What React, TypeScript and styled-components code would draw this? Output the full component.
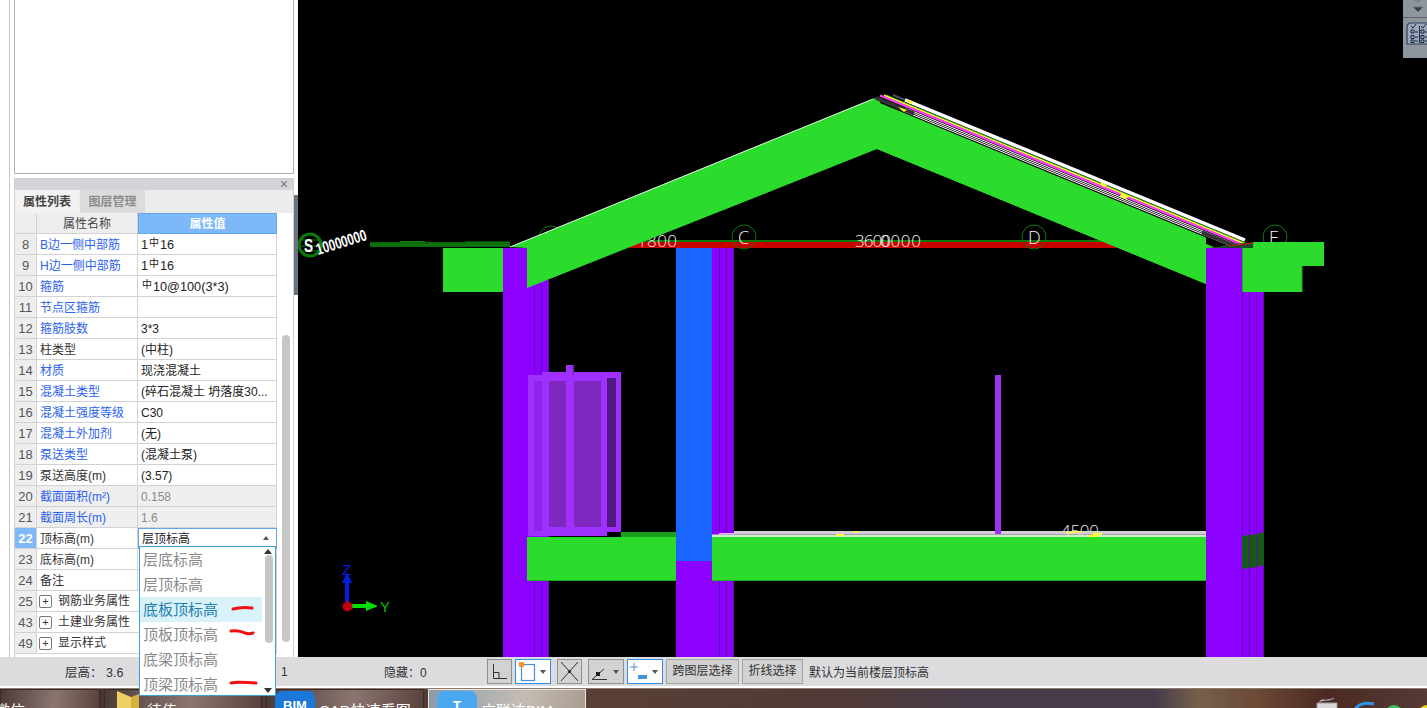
import React from "react";
import styled, { createGlobalStyle } from "styled-components";

const FONT = `"Liberation Sans", "Noto Sans CJK SC", sans-serif`;

type Prop = { no: number; name: string; value?: React.ReactNode; link?: boolean; muted?: boolean; active?: boolean; group?: boolean };

const Num = styled.span`
  font-size: 12.700px;
`;

const Sym = styled.span`
  display: inline-block;
  font-size: 10px;
  line-height: 10px;
  vertical-align: 3px;
  margin: 0 1px;
`;

const Rebar = () => <Sym>中</Sym>;

const props: Prop[] = [
  { no: 8, name: "B边一侧中部筋", value: <Num>1<Rebar />16</Num>, link: true },
  { no: 9, name: "H边一侧中部筋", value: <Num>1<Rebar />16</Num>, link: true },
  { no: 10, name: "箍筋", value: <Num><Rebar />10@100(3*3)</Num>, link: true },
  { no: 11, name: "节点区箍筋", value: "", link: true },
  { no: 12, name: "箍筋肢数", value: "3*3", link: true },
  { no: 13, name: "柱类型", value: "(中柱)" },
  { no: 14, name: "材质", value: "现浇混凝土", link: true },
  { no: 15, name: "混凝土类型", value: "(碎石混凝土 坍落度30...", link: true },
  { no: 16, name: "混凝土强度等级", value: "C30", link: true },
  { no: 17, name: "混凝土外加剂", value: "(无)", link: true },
  { no: 18, name: "泵送类型", value: "(混凝土泵)", link: true },
  { no: 19, name: "泵送高度(m)", value: "(3.57)" },
  { no: 20, name: "截面面积(m²)", value: "0.158", link: true, muted: true },
  { no: 21, name: "截面周长(m)", value: "1.6", link: true, muted: true },
  { no: 22, name: "顶标高(m)", value: "层顶标高", active: true },
  { no: 23, name: "底标高(m)", value: "" },
  { no: 24, name: "备注", value: "" },
  { no: 25, name: "钢筋业务属性", group: true },
  { no: 43, name: "土建业务属性", group: true },
  { no: 49, name: "显示样式", group: true },
];

const options = [
  { label: "层底标高" },
  { label: "层顶标高" },
  { label: "底板顶标高", selected: true, mark: "M93 12c7-2 13-2 19-1" },
  { label: "顶板顶标高", mark: "M91 9c6-1 10 0 14 2 3 1 5 1 8 0" },
  { label: "底梁顶标高" },
  { label: "顶梁顶标高", mark: "M91 11c8-2 16 0 25 0" },
];

// top edge of the layer stack lying on the right roof slope
const slope = (off: number, x1: number, x2: number) => {
  const y = (x: number) => 93 + (x - 893) * 0.412 + off;
  return `M${x1} ${y(x1)}L${x2} ${y(x2)}`;
};

const App = () => (
  <Page>
    <GlobalStyle />
    <Workspace>
      <LeftDock>
        <PreviewBox />
        <PropertyPanel>
          <PanelTitle>×</PanelTitle>
          <Tabs>
            <Tab $on>属性列表</Tab>
            <Tab>图层管理</Tab>
          </Tabs>
          <TableWrap>
            <Grid>
              <HeadNo />
              <HeadName>属性名称</HeadName>
              <HeadValue>属性值</HeadValue>
              {props.map((p) => (
                <React.Fragment key={p.no}>
                  <NoCell $active={p.active}>{p.no}</NoCell>
                  <NameCell $link={p.link} $muted={p.muted} $group={p.group}>
                    {p.group && <Plus>+</Plus>}
                    {p.name}
                  </NameCell>
                  {p.group ? null : (
                    <ValueCell $muted={p.muted} $active={p.active}>
                      {p.value}
                      {p.active && <SelectCaret />}
                    </ValueCell>
                  )}
                </React.Fragment>
              ))}
            </Grid>
            <PanelScroll />
            <Dropdown>
              {options.map((o) => (
                <Option key={o.label} $selected={o.selected}>
                  {o.label}
                  {o.mark && (
                    <Mark viewBox="0 0 122 25">
                      <path d={o.mark} fill="none" stroke="#f01010" strokeWidth="3" strokeLinecap="round" />
                    </Mark>
                  )}
                </Option>
              ))}
              <DropUp />
              <DropThumb />
              <DropDown />
            </Dropdown>
          </TableWrap>
        </PropertyPanel>
        <DockHandle />
      </LeftDock>
      <Canvas>
        <Model viewBox="298 0 1129 657">
          <g fill="#8b00ff">
            <rect x="503" y="248" width="24" height="409" />
            <rect x="527" y="280" width="22" height="377" />
            <rect x="676" y="561" width="36" height="96" />
            <rect x="712" y="244" width="22" height="413" />
            <rect x="1242" y="292" width="22" height="365" />
          </g>
          <g stroke="#5c10a8" strokeWidth="1">
            <path d="M534.500 284V657M541.500 281V657M548.500 281V657M719.500 244V657M726.500 244V657M733.500 244V657M1242.500 292V657M1249.500 292V657M1256.500 292V657M1263.500 292V657" />
          </g>
          <path d="M1242 536l7-1v33l-7 1zM1250 535l6-1v33l-6 1zM1257 534l7-2v33l-7 2z" fill="#155a15" />
          <rect x="676" y="248" width="36" height="313" fill="#1a66ff" />

          <path d="M630 242H1116V248H630z" fill="#c80000" />
          <path d="M630 241H1120" stroke="#0b7a0b" strokeWidth="2" />
          <rect x="370" y="242" width="140" height="5" fill="#0a6a0a" />
          <path d="M400 241.500H425M465 242H510M370 245H510" stroke="#137f13" strokeWidth="1" />

          <g fill="none" stroke="#0b7a0b" strokeWidth="1">
            <circle cx="551" cy="238" r="12" />
            <circle cx="744" cy="237" r="12" />
            <circle cx="1034" cy="237" r="12" />
            <circle cx="1275" cy="237" r="12" />
          </g>
          <circle cx="310" cy="245" r="11" fill="none" stroke="#0b7a0b" strokeWidth="3" />
          <path d="M300 240l20 0M299 246l22 0M301 251l18 0" stroke="#0b7a0b" />
          <Dim x="738" y="244" fontSize="18">C</Dim>
          <Dim x="1028" y="244" fontSize="18">D</Dim>
          <Dim x="1269" y="244" fontSize="18">E</Dim>
          <Dim x="637" y="247" fontSize="17" textLength="40">1800</Dim>
          <Dim x="855" y="247" fontSize="17" textLength="36">3600</Dim>
          <Dim x="880" y="247" fontSize="17" textLength="41">0000</Dim>
          <Dim x="1061" y="537" fontSize="17" textLength="38">4500</Dim>
          <Squiggle fontSize="17" transform="translate(304 252) scale(0.8 1.1)">S</Squiggle>
          <Squiggle fontSize="16" transform="translate(318 255) rotate(-17)" textLength="52" lengthAdjust="spacingAndGlyphs">10000000</Squiggle>

          <polygon points="510,247 875,98 1250,245 1232,247 1206,248 1206,284 877,149 527,288 527,248" fill="#2cdc2c" />
          <path d="M510 247L873 99" stroke="#e8f8e8" strokeWidth="1" fill="none" />
          <g fill="none">
            <path d={slope(0, 893, 1253) + "L1233 255L874 107z"} fill="#000" stroke="none" />
            <path d={slope(2, 905, 1245)} stroke="#ffffff" strokeWidth="3.500" />
            <path d={slope(2, 893, 905)} stroke="#505050" strokeWidth="2" />
            <path d={slope(4.800, 886, 1248)} stroke="#1fae1f" strokeWidth="1" />
            <path d={slope(6, 884, 1248)} stroke="#ffff30" strokeWidth="1.500" />
            <path d={slope(7.800, 880, 1242)} stroke="#ff40ff" strokeWidth="2.200" />
            <path d={slope(10.200, 905, 1236)} stroke="#ffffff" strokeWidth="1" />
            <path d={slope(12, 905, 1232)} stroke="#ffffff" strokeWidth="1" />
            <path d={slope(13.800, 905, 1228)} stroke="#ffffff" strokeWidth="1" />
            <path d={slope(12, 876, 914)} stroke="#333333" strokeWidth="4" />
            <path d={slope(12, 1202, 1236)} stroke="#333333" strokeWidth="4" />
          </g>
          <path d={slope(15.500, 872, 1206) + "L1206 284L877 149z"} fill="#2cdc2c" />
          <path d="M905 99l9 3-4 2zM898 107l9 3-3 2zM1100 182l8 3-5 2zM1121 193l8 3-3 3-6-2z" fill="#ffff30" />
          <rect x="1206" y="248" width="36" height="409" fill="#8b00ff" />

          <g fill="#2cdc2c">
            <rect x="443" y="248" width="60" height="44" />
            <rect x="1242" y="248" width="60" height="44" />
            <rect x="1253" y="242" width="71" height="24" />
            <rect x="527" y="537" width="149" height="44" />
            <rect x="712" y="537" width="494" height="44" />
          </g>
          <path d="M1226 245L1253 242L1253 248H1212z" fill="#1a4a2a" />
          <path d="M1228 246L1254 243" stroke="#e01010" strokeWidth="1" />
          <path d="M1302 266V292M1242.500 248V292" stroke="#1fae1f" />
          <path d="M527 580.500H676M712 580.500H1206" stroke="#1fae1f" />
          <rect x="621" y="532" width="55" height="5" fill="#1c9f1c" />
          <rect x="734" y="531" width="472" height="2" fill="#c8d8c8" />
          <rect x="719" y="533" width="487" height="1.500" fill="#f0b8f0" />
          <rect x="712" y="534.500" width="494" height="2.500" fill="#c8f0c8" />
          <path d="M836 534h8v2h-8zM853 531h6v1.500h-6zM1066 532h8v1.500h-8zM1073 531h9v1.500h-9zM1089 535h9v2h-9zM1093 533h9v2h-9z" fill="#ffff30" />

          <rect x="528" y="375" width="79" height="161" fill="#a030ff" />
          <rect x="542" y="372" width="79" height="160" fill="#a030ff" />
          <rect x="534" y="381" width="8" height="150" fill="#8f25e8" />
          <rect x="549" y="381" width="17" height="146" fill="#7f28c0" />
          <rect x="574" y="381" width="27" height="146" fill="#7f28c0" />
          <rect x="607" y="378" width="9" height="149" fill="#521a80" />
          <rect x="566" y="365" width="8" height="165" fill="#a030ff" />
          <rect x="572" y="365" width="2" height="10" fill="#7f28c0" />
          <rect x="995" y="375" width="6" height="159" fill="#a030f0" />

          <g>
            <path d="M347 606V580" stroke="#0020e0" strokeWidth="4" />
            <path d="M347 572l-5 11h10z" fill="#0020e0" />
            <path d="M347 606H367" stroke="#00e000" strokeWidth="4" />
            <path d="M378 606l-12-5v10z" fill="#00e000" />
            <circle cx="347.500" cy="606.500" r="5" fill="#c00010" />
            <AxisLabel x="342" y="575" fill="#0020e0">Z</AxisLabel>
            <AxisLabel x="380" y="612" fill="#00c000">Y</AxisLabel>
          </g>
        </Model>
        <ToolStrip>
          <svg width="24" height="58" viewBox="0 0 24 58">
            <path d="M10 7h10l-5 5zM11 1h7" fill="#3a3f45" stroke="#6c7278" />
            <path d="M0 17.500h24" stroke="#5f656c" />
            <path d="M6 23h21v21H4V26z" fill="#9aa7bd" stroke="#2e3f5a" strokeWidth="1.200" />
            <g fill="none" stroke="#1d2a40">
              <path d="M8 30h3v3H8zM8 35.500h3v3H8zM8 40h3v2.500H8zM18 30h3v3h-3zM18 35.500h3v3h-3zM18 40h3v2.500h-3zM12 32h3M12 37h3M12 41h3M22 32h3M22 37h3M22 41h3M16.500 26v17" />
            </g>
            <path d="M8 26l2 2 3-4M18 26l2 2 3-4" fill="none" stroke="#1d2a40" />
          </svg>
        </ToolStrip>
      </Canvas>
    </Workspace>

    <StatusBar>
      <StoreyText>层高： 3.6</StoreyText>
      <CountText>1</CountText>
      <HiddenText>隐藏：0</HiddenText>
      <ToolGroup>
        <ToolBtn>
          <svg width="21" height="21" viewBox="0 0 21 21"><path d="M4.500 3v14.500H18M4.500 11.500H10v6" fill="none" stroke="#333" /></svg>
        </ToolBtn>
        <ToolBtn $on $wide>
          <svg width="21" height="21" viewBox="0 0 21 21">
            <rect x="4.500" y="3.500" width="13" height="16" fill="none" stroke="#4a90d9" strokeWidth="1.200" />
            <rect x="2" y="1" width="5" height="5" fill="#f59332" />
          </svg>
          <Caret />
        </ToolBtn>
        <ToolBtn $ml={3}>
          <svg width="21" height="21" viewBox="0 0 21 21"><path d="M2 1l17 19M19 1L2 20" stroke="#333" /><circle cx="10.500" cy="10.500" r="1.700" fill="#333" /></svg>
        </ToolBtn>
        <ToolBtn $wide $ml={3}>
          <svg width="21" height="21" viewBox="0 0 21 21"><path d="M2 18.500h15M2 18.500L14 8" fill="none" stroke="#333" /><rect x="6" y="11" width="4" height="4" fill="#222" /></svg>
          <Caret />
        </ToolBtn>
        <ToolBtn $on $wide>
          <svg width="21" height="21" viewBox="0 0 21 21"><path d="M1 6h8M5 2v8" stroke="#4a90d9" /><rect x="9" y="14" width="9" height="4" fill="#4a90d9" /></svg>
          <Caret />
        </ToolBtn>
        <TextBtn $w={73}>跨图层选择</TextBtn>
        <TextBtn $w={61}>折线选择</TextBtn>
      </ToolGroup>
      <HintText>默认为当前楼层顶标高</HintText>
    </StatusBar>
    <WhiteLine />

    <Taskbar>
      <TaskItem $w={100}><FirstLabel>微信</FirstLabel></TaskItem>
      <TaskItem $w={158}>
        <svg width="28" height="20" viewBox="0 0 28 20" style={{ marginLeft: 10 }}>
          <path d="M2 0l14 6v14H2z" fill="#f0d060" />
          <path d="M16 6l8-3v17h-8z" fill="#d8b040" />
        </svg>
        <TaskLabel>待传</TaskLabel>
      </TaskItem>
      <TaskItem $w={158}>
        <TaskIcon $bg="#1b78d8">BIM</TaskIcon>
        <TaskLabel>CAD快速看图</TaskLabel>
      </TaskItem>
      <TaskItem $w={158} $light>
        <TaskIcon $bg="#4aa8f0">T</TaskIcon>
        <TaskLabel>广联达BIM</TaskLabel>
      </TaskItem>
      <Tray>
        <svg width="112" height="20" viewBox="0 0 112 20">
          <path d="M2 20v-6h20v6M4 13c4-5 8 1 15-4" fill="#d8d8d8" stroke="#9a9a9a" />
          <path d="M40 20c4-5 10-7 19-5" fill="none" stroke="#2a95ee" strokeWidth="3" />
          <circle cx="79" cy="25" r="9" fill="#36c45a" />
          <circle cx="76" cy="21" r="1" fill="#fff" />
          <circle cx="82" cy="21" r="1" fill="#fff" />
          <circle cx="112" cy="25" r="9" fill="#e8d830" />
        </svg>
      </Tray>
    </Taskbar>
  </Page>
);

const GlobalStyle = createGlobalStyle`
  html, body { margin: 0; padding: 0; background: #000; }
  body { font-family: ${FONT}; font-size: 12px; color: #222; overflow: hidden; }
`;

const Page = styled.div`
  width: 1427px;
  height: 708px;
  display: flex;
  flex-direction: column;
  overflow: hidden;
`;

const Workspace = styled.div`
  display: flex;
  height: 657px;
  background: #fff;
`;

const LeftDock = styled.aside`
  position: relative;
  width: 289px;
  margin-left: 9px;
  flex: none;
  background: #fff;
  border-left: 1px solid #c6c6c6;
  padding: 0 4px;
  box-sizing: border-box;
  display: flex;
  flex-direction: column;
  gap: 4px;
`;

const DockHandle = styled.div`
  position: absolute;
  right: 0;
  top: 195px;
  width: 4px;
  height: 100px;
  background: #6b737a;
`;

const PreviewBox = styled.div`
  height: 174px;
  flex: none;
  background: #fff;
  border: 1px solid #b4b4b4;
  border-top: 0;
  box-sizing: border-box;
`;

const PropertyPanel = styled.section`
  flex: 1;
  display: flex;
  flex-direction: column;
  background: #ececec;
  border: 1px solid #cfd0d3;
  border-bottom: 0;
  box-sizing: border-box;
  min-height: 0;
`;

const PanelTitle = styled.div`
  height: 11px;
  flex: none;
  background: #d3d4d8;
  color: #777;
  font-size: 14px;
  line-height: 11px;
  text-align: right;
  padding-right: 5px;
`;

const Tabs = styled.div`
  display: flex;
  height: 23px;
  flex: none;
`;

const Tab = styled.div<{ $on?: boolean }>`
  width: ${(p) => (p.$on ? "64px" : "65px")};
  margin-right: 1px;
  text-align: center;
  font-size: 12px;
  line-height: 25px;
  font-weight: bold;
  background: ${(p) => (p.$on ? "#f2f2f2" : "#dcdcdc")};
  color: ${(p) => (p.$on ? "#444" : "#8c8c8c")};
`;

const TableWrap = styled.div`
  position: relative;
  flex: 1;
  background: #fff;
  min-height: 0;
`;

const Grid = styled.div`
  display: grid;
  grid-template-columns: 22px 101px 139px;
  grid-auto-rows: 21px;
  width: 262px;
`;

const Cell = styled.div`
  box-sizing: border-box;
  border-right: 1px solid #d2d2d2;
  border-bottom: 1px solid #d2d2d2;
  white-space: nowrap;
  overflow: hidden;
  line-height: 22px;
`;

const HeadNo = styled(Cell)`
  background: #eeeeee;
`;

const HeadName = styled(Cell)`
  background: #eeeeee;
  text-align: center;
  color: #444;
`;

const HeadValue = styled(Cell)`
  background: #7db8f8;
  color: #fff;
  text-align: center;
  font-weight: bold;
  border: 1px solid #62a6ef;
  line-height: 20px;
`;

const NoCell = styled(Cell)<{ $active?: boolean }>`
  background: ${(p) => (p.$active ? "#7db8f8" : "#eeeeee")};
  color: ${(p) => (p.$active ? "#fff" : "#555")};
  font-weight: ${(p) => (p.$active ? "bold" : "normal")};
  font-size: 13px;
  text-align: center;
`;

const NameCell = styled(Cell)<{ $link?: boolean; $muted?: boolean; $group?: boolean }>`
  color: ${(p) => (p.$link ? "#2b62f0" : "#333")};
  padding-left: ${(p) => (p.$group ? "2px" : "3px")};
  background: ${(p) => (p.$muted ? "#efefef" : "#fff")};
  ${(p) => p.$group && "grid-column: span 2; display: flex; align-items: center;"}
`;

const ValueCell = styled(Cell)<{ $muted?: boolean; $active?: boolean }>`
  position: relative;
  padding-left: 3px;
  color: ${(p) => (p.$muted ? "#8a8a8a" : "#222")};
  background: ${(p) => (p.$muted ? "#efefef" : "#fff")};
  ${(p) => p.$active && "border: 1px solid #62a6ef; border-bottom-width: 2px; line-height: 20px;"}
`;

const SelectCaret = styled.span`
  position: absolute;
  right: 7px;
  top: 7px;
  border-left: 3px solid transparent;
  border-right: 3px solid transparent;
  border-bottom: 4px solid #555;
`;

const Plus = styled.span`
  width: 11px;
  height: 11px;
  flex: none;
  margin: 0 6px 0 0;
  border: 1px solid #777;
  border-radius: 2px;
  font-size: 11px;
  line-height: 10px;
  text-align: center;
  color: #333;
`;

const PanelScroll = styled.div`
  position: absolute;
  left: 267px;
  top: 122px;
  width: 8px;
  height: 307px;
  border-radius: 4px;
  background: #c6c6c6;
`;

const Dropdown = styled.div`
  position: absolute;
  left: 124px;
  top: 333px;
  width: 137px;
  height: 150px;
  box-sizing: border-box;
  background: #fff;
  border: 1px solid #3aa0d0;
  z-index: 5;
`;

const Option = styled.div<{ $selected?: boolean }>`
  position: relative;
  width: 122px;
  height: 25px;
  padding-left: 3px;
  box-sizing: border-box;
  font-size: 15px;
  line-height: 26px;
  color: ${(p) => (p.$selected ? "#1f7fb0" : "#8a8a8a")};
  background: ${(p) => (p.$selected ? "#d9f1f9" : "transparent")};
`;

const Mark = styled.svg`
  position: absolute;
  left: 0;
  top: 0;
  width: 122px;
  height: 25px;
`;

const DropUp = styled.span`
  position: absolute;
  right: 3px;
  top: 2px;
  border-left: 4px solid transparent;
  border-right: 4px solid transparent;
  border-bottom: 5px solid #333;
`;

const DropDown = styled.span`
  position: absolute;
  right: 3px;
  bottom: 2px;
  border-left: 4px solid transparent;
  border-right: 4px solid transparent;
  border-top: 5px solid #333;
`;

const DropThumb = styled.span`
  position: absolute;
  right: 2px;
  top: 8px;
  width: 8px;
  height: 88px;
  border-radius: 4px;
  background: #c6c6c6;
`;

const Canvas = styled.main`
  position: relative;
  flex: 1;
  background: #000;
`;

const Model = styled.svg`
  display: block;
  width: 1129px;
  height: 657px;
`;

const Dim = styled.text`
  fill: #f4f4f4;
  font-family: "Open Sans", "Liberation Sans", sans-serif;
  font-weight: 300;
`;

const Squiggle = styled.text`
  fill: #fff;
  font-family: "Liberation Sans", sans-serif;
  font-weight: bold;
`;

const AxisLabel = styled.text`
  font-family: "Liberation Sans", sans-serif;
  font-size: 15px;
`;

const ToolStrip = styled.div`
  position: absolute;
  right: 0;
  top: 0;
  width: 24px;
  height: 58px;
  background: #8f959c;
  overflow: hidden;
`;

const StatusBar = styled.footer`
  height: 29px;
  flex: none;
  display: flex;
  align-items: center;
  background: #dcdcdf;
  color: #333;
  font-size: 12px;
  white-space: nowrap;
`;

const StoreyText = styled.span`
  margin-left: 65px;
  width: 216px;
  font-size: 12.500px;
`;

const CountText = styled.span`
  width: 103px;
`;

const HiddenText = styled.span`
  width: 103px;
`;

const ToolGroup = styled.div`
  display: flex;
  align-items: center;
  gap: 3px;
`;

const ToolBtn = styled.div<{ $on?: boolean; $wide?: boolean; $ml?: number }>`
  position: relative;
  display: flex;
  align-items: center;
  justify-content: flex-start;
  box-sizing: border-box;
  height: 25px;
  width: ${(p) => (p.$wide ? "36px" : "25px")};
  margin-left: ${(p) => p.$ml ?? 0}px;
  padding-left: 1px;
  border: 1px solid ${(p) => (p.$on ? "#2e8df0" : "#8f8f8f")};
  background: ${(p) => (p.$on ? "#fff" : "#d2d2d2")};
`;

const Caret = styled.span`
  position: absolute;
  right: 4px;
  top: 10px;
  border-left: 3px solid transparent;
  border-right: 3px solid transparent;
  border-top: 4px solid #555;
`;

const TextBtn = styled.div<{ $w: number }>`
  box-sizing: border-box;
  width: ${(p) => p.$w}px;
  height: 25px;
  border: 1px solid #a5a5a5;
  background: #d2d2d2;
  line-height: 23px;
  text-align: center;
  color: #333;
`;

const HintText = styled.span`
  margin-left: 6px;
`;

const WhiteLine = styled.div`
  height: 2px;
  flex: none;
  background: #fff;
`;

const Taskbar = styled.nav`
  position: relative;
  height: 20px;
  flex: none;
  display: flex;
  gap: 4px;
  overflow: hidden;
  box-sizing: border-box;
  border-top: 1px solid #8c7c70;
  background: linear-gradient(90deg, #4a3030 0%, #5a3f34 41%, #4f3a38 60%, #473c4a 68%, #473c4a 81%, #76604a 84%, #6c4a36 88%, #4a2a22 93%, #573a36 100%);
`;

const TaskItem = styled.div<{ $w: number; $light?: boolean }>`
  width: ${(p) => p.$w}px;
  flex: none;
  display: flex;
  gap: 4px;
  align-items: flex-start;
  padding-top: 1px;
  box-sizing: border-box;
  border: 1px solid ${(p) => (p.$light ? "#e8e4e0" : "#3a2a26")};
  border-bottom: 0;
  background: ${(p) =>
    p.$light ? "linear-gradient(100deg, #8a9aa8, #c4bdb4 60%, #ab9c90)" : "linear-gradient(100deg, #4a3a38, #8b7570 55%, #59423e)"};
`;

const TaskIcon = styled.span<{ $bg: string }>`
  width: 40px;
  height: 36px;
  flex: none;
  margin-left: 8px;
  border-radius: 7px;
  background: ${(p) => p.$bg};
  color: #fff;
  font-size: 13px;
  font-weight: bold;
  text-align: center;
  line-height: 30px;
`;

const TaskLabel = styled.span`
  color: #fff;
  font-size: 15px;
  line-height: 40px;
  white-space: nowrap;
`;

const FirstLabel = styled(TaskLabel)`
  margin-left: -6px;
`;

const Tray = styled.div`
  position: absolute;
  right: 0;
  top: 0;
  height: 20px;
  width: 112px;
`;

export default App;
